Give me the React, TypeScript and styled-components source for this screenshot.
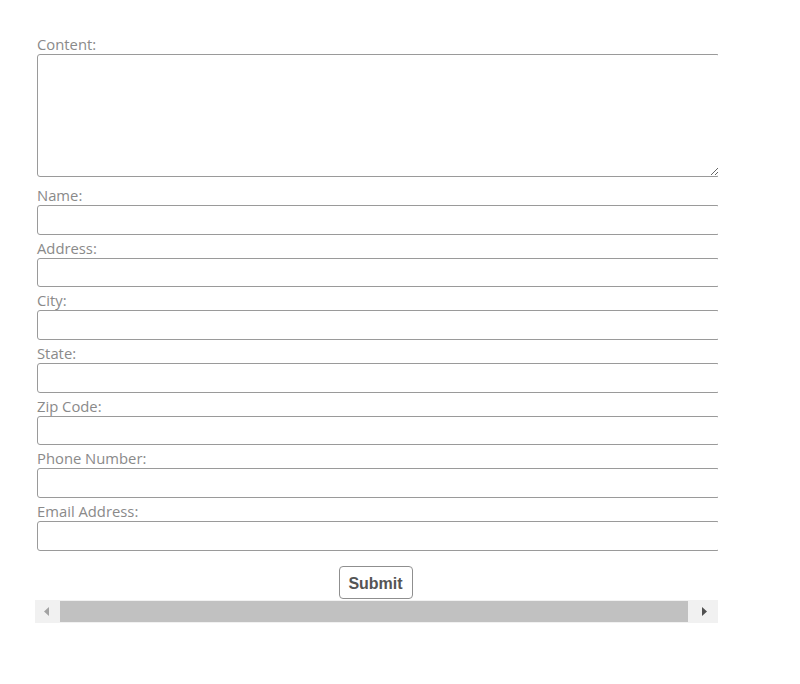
import React from 'react';
import styled, { createGlobalStyle } from 'styled-components';

const GlobalStyle = createGlobalStyle`
  html, body {
    margin: 0;
    padding: 0;
    background: #fff;
  }

  body {
    font-family: 'Open Sans', 'Liberation Sans', sans-serif;
  }
`;

const Page = styled.div`
  padding: 31px 0 0 35px;
  width: 800px;
  height: 684px;
  box-sizing: border-box;
`;

const Frame = styled.div`
  width: 683px;
`;

const Viewport = styled.div`
  overflow: hidden;
  padding-left: 2px;
`;

const Form = styled.form`
  margin: 0;
`;

const Label = styled.label`
  display: block;
  padding-top: 4px;
  margin-bottom: 2px;
  height: 17px;
  line-height: 18px;
  font-size: 14.8px;
  color: #8a8a8a;
  white-space: nowrap;
`;

const TextArea = styled.textarea`
  display: block;
  width: 683px;
  height: 123px;
  margin: 0 0 5px;
  box-sizing: border-box;
  border: 1px solid #9a9a9a;
  border-radius: 3px;
  background: #fff;
  font-family: inherit;
`;

const Input = styled.input`
  display: block;
  width: 683px;
  height: 29.67px;
  margin: 0;
  box-sizing: border-box;
  border: 1px solid #9a9a9a;
  border-radius: 3px;
  background: #fff;
  font-family: inherit;
`;

const ButtonRow = styled.div`
  width: 677px;
  margin-top: 15px;
  text-align: center;
`;

const SubmitButton = styled.button`
  width: 74px;
  height: 33px;
  padding: 3px 0 0;
  border: 1px solid #8f8f8f;
  border-radius: 4px;
  background: #fff;
  color: #555;
  font-family: 'Liberation Sans', Arial, sans-serif;
  font-weight: bold;
  font-size: 16px;
  vertical-align: top;
`;

const Scrollbar = styled.div`
  display: flex;
  height: 23px;
  margin-top: 1px;
  background: #f1f1f1;
`;

const ArrowButton = styled.div<{ $w: number }>`
  flex: 0 0 ${(p) => p.$w}px;
  display: flex;
  align-items: center;
  justify-content: center;
`;

const Thumb = styled.div`
  flex: 1;
  margin: 1px 1px;
  background: #c1c1c1;
`;

const Arrow = ({ dir }: { dir: 'left' | 'right' }) => (
  <svg width="6" height="9" viewBox="0 0 6 9">
    {dir === 'left' ? <path d="M5 0 L0 4.5 L5 9 Z" fill="#a3a3a3" /> : <path d="M1 0 L6 4.5 L1 9 Z" fill="#505050" />}
  </svg>
);

const fields = ['Name', 'Address', 'City', 'State', 'Zip Code', 'Phone Number', 'Email Address'];

const App: React.FC = () => (
  <Page>
    <GlobalStyle />
    <Frame>
      <Viewport>
        <Form onSubmit={(ev) => ev.preventDefault()}>
          <Label htmlFor="content">Content:</Label>
          <TextArea id="content" />
          {fields.map((f) => (
            <div key={f}>
              <Label htmlFor={f}>{f}:</Label>
              <Input id={f} type="text" />
            </div>
          ))}
          <ButtonRow>
            <SubmitButton type="submit">Submit</SubmitButton>
          </ButtonRow>
        </Form>
      </Viewport>
      <Scrollbar>
        <ArrowButton $w={24}>
          <Arrow dir="left" />
        </ArrowButton>
        <Thumb />
        <ArrowButton $w={29}>
          <Arrow dir="right" />
        </ArrowButton>
      </Scrollbar>
    </Frame>
  </Page>
);

export default App;
